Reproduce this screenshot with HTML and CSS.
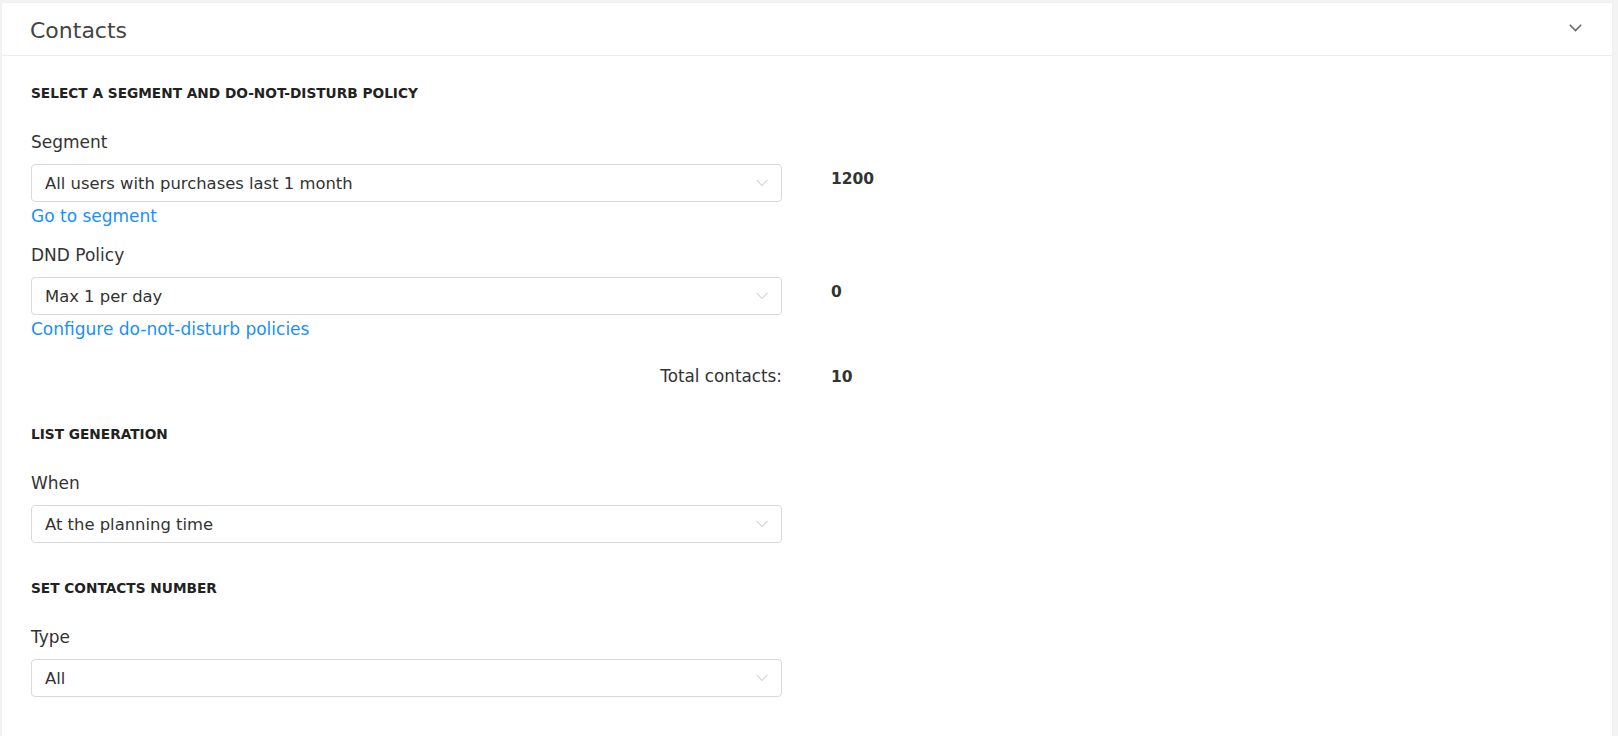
FILE: index.html
```html
<!DOCTYPE html>
<html lang="en">
<head>
<meta charset="utf-8">
<title>Contacts</title>
<link rel="stylesheet" href="styles.css">
</head>
<body>
<div class="card">
  <div class="card-header">
    <h2 class="card-title">Contacts</h2>
    <svg class="collapse-icon" width="13" height="8" viewBox="0 0 13 8"><path d="M0.8 0.8 L6.5 6.6 L12.2 0.8" fill="none" stroke="#666" stroke-width="1.5"/></svg>
  </div>
  <div class="card-body">
    <section class="group">
      <h3 class="group-title">SELECT A SEGMENT AND DO-NOT-DISTURB POLICY</h3>
      <div class="field">
        <div class="label">Segment</div>
        <div class="row">
          <div class="select"><span>All users with purchases last 1 month</span><svg class="arrow" width="12" height="8" viewBox="0 0 12 8"><path d="M0.5 0.8 L6 6.6 L11.5 0.8" fill="none" stroke="#bfbfbf" stroke-width="1"/></svg></div>
          <div class="value">1200</div>
        </div>
        <a class="link" href="#">Go to segment</a>
      </div>
      <div class="field">
        <div class="label">DND Policy</div>
        <div class="row">
          <div class="select"><span>Max 1 per day</span><svg class="arrow" width="12" height="8" viewBox="0 0 12 8"><path d="M0.5 0.8 L6 6.6 L11.5 0.8" fill="none" stroke="#bfbfbf" stroke-width="1"/></svg></div>
          <div class="value">0</div>
        </div>
        <a class="link" href="#">Configure do-not-disturb policies</a>
      </div>
      <div class="row total-row">
        <div class="total-label">Total contacts:</div>
        <div class="value total-value">10</div>
      </div>
    </section>
    <section class="group group-list">
      <h3 class="group-title">LIST GENERATION</h3>
      <div class="field">
        <div class="label">When</div>
        <div class="row">
          <div class="select"><span>At the planning time</span><svg class="arrow" width="12" height="8" viewBox="0 0 12 8"><path d="M0.5 0.8 L6 6.6 L11.5 0.8" fill="none" stroke="#bfbfbf" stroke-width="1"/></svg></div>
        </div>
      </div>
    </section>
    <section class="group group-number">
      <h3 class="group-title">SET CONTACTS NUMBER</h3>
      <div class="field">
        <div class="label">Type</div>
        <div class="row">
          <div class="select"><span>All</span><svg class="arrow" width="12" height="8" viewBox="0 0 12 8"><path d="M0.5 0.8 L6 6.6 L11.5 0.8" fill="none" stroke="#bfbfbf" stroke-width="1"/></svg></div>
        </div>
      </div>
    </section>
  </div>
</div>
</body>
</html>
```
FILE: styles.css
```css
html, body {
  margin: 0;
  padding: 0;
}
body {
  background: #f3f3f3;
  font-family: "DejaVu Sans", "Open Sans", sans-serif;
  color: #333;
  padding: 3px 6px 0 2px;
  height: 736px;
  box-sizing: border-box;
  overflow: hidden;
}
.card {
  background: #fff;
  height: 100%;
  box-shadow: 0 0 2px rgba(0,0,0,0.04);
}
.card-header {
  height: 53px;
  box-sizing: border-box;
  padding: 3px 30px 0 28px;
  display: flex;
  align-items: center;
  justify-content: space-between;
  border-bottom: 1px solid #ececec;
}
.card-title {
  margin: 0;
  font-size: 22px;
  font-weight: 400;
  color: #444;
  line-height: 28px;
}
.collapse-icon {
  display: block;
  margin-top: -5px;
}
.card-body {
  padding: 29px 29px 0 29px;
}
.group-title {
  margin: 0 0 31px 0;
  font-size: 13.7px;
  line-height: 16px;
  font-weight: 700;
  color: #222;
}
.field {
  margin-bottom: 19px;
}
.label {
  font-size: 17px;
  line-height: 20px;
  margin-bottom: 12px;
  color: #333;
}
.row {
  display: grid;
  grid-template-columns: 751px auto;
  column-gap: 49px;
  align-items: start;
}
.select {
  height: 38px;
  box-sizing: border-box;
  border: 1px solid #d9d9d9;
  border-radius: 4px;
  display: flex;
  align-items: center;
  justify-content: space-between;
  padding: 0 13px 0 13px;
  font-size: 16.4px;
  color: #333;
}
.arrow {
  display: block;
}
.value {
  font-size: 15.5px;
  font-weight: 700;
  line-height: 20px;
  padding-top: 5px;
  color: #333;
}
.link {
  display: block;
  margin-top: 4px;
  font-size: 17px;
  line-height: 20px;
  color: #1890ff;
  text-decoration: none;
  width: max-content;
}
.total-row {
  margin-top: 27px;
  align-items: baseline;
}
.total-label {
  text-align: right;
  font-size: 16.8px;
  line-height: 20px;
}
.total-value {
  padding-top: 0;
}
.group-list {
  margin-top: 39px;
}
.group-list .field {
  margin-bottom: 0;
}
.group-number {
  margin-top: 37px;
}
```
